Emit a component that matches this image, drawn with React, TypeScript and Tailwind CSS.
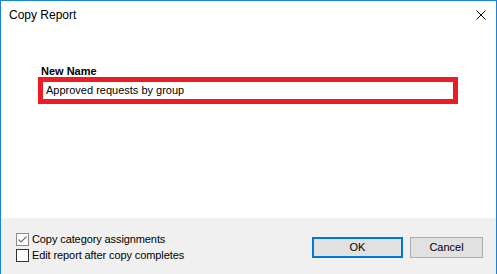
const sans = "font-['Liberation_Sans',Arial,sans-serif]";

function Checkbox({ checked, label }: { checked?: boolean; label: string }) {
  return (
    <label className="flex h-[16px] items-center">
      <span
        className={`flex h-[13px] w-[13px] items-center justify-center border bg-white ${
          checked ? "border-[#8a8a8a]" : "border-[#333333]"
        }`}
      >
        {checked && (
          <svg width="11" height="11" viewBox="0 0 11 11">
            <path d="M1.5 5.5 L4 8 L9.5 2.5" fill="none" stroke="#6f6f6f" strokeWidth="1.2" />
          </svg>
        )}
      </span>
      <span className="ml-[3px] text-[11px] leading-[14px] tracking-[-0.1px] text-black">{label}</span>
    </label>
  );
}

export default function App() {
  return (
    <div className={`${sans} flex h-[274px] w-[497px] flex-col border-x border-t border-[#1883d7] bg-white`}>
      {/* Title bar */}
      <div className="flex h-[30px] items-start justify-between pl-2 pr-[10px]">
        <span className="pt-[7px] text-[12px] leading-[14px] text-black">Copy Report</span>
        <svg className="mt-[9px]" width="10" height="10" viewBox="0 0 10 10">
          <path d="M0.5 0.5 L9.5 9.5 M9.5 0.5 L0.5 9.5" stroke="#000" strokeWidth="1" />
        </svg>
      </div>

      {/* Body */}
      <div className="flex-1 px-[37px] pt-[34px]">
        <div className="pl-[3px] text-[11px] font-bold leading-[12px] text-black">New Name</div>
        <div className="h-[27px] w-[420px] border-[5px] border-[#ed1c24] bg-white pl-[3px]">
          <span className="block text-[11px] leading-[17px] text-black">Approved requests by group</span>
        </div>
      </div>

      {/* Footer */}
      <div className="flex h-[56px] items-start justify-between bg-[#f0f0f0] pl-[15px] pr-[13px]">
        <div className="flex flex-col pt-[13px]">
          <Checkbox checked label="Copy category assignments" />
          <Checkbox label="Edit report after copy completes" />
        </div>
        <div className="flex gap-[7px] pt-[19px]">
          <button className="h-[21px] w-[91px] border-2 border-[#0078d7] bg-[#e1e1e1] text-[11px] leading-[17px] text-black">
            OK
          </button>
          <button className="h-[21px] w-[73px] border border-[#adadad] bg-[#e1e1e1] text-[11px] leading-[19px] text-black">
            Cancel
          </button>
        </div>
      </div>
    </div>
  );
}
